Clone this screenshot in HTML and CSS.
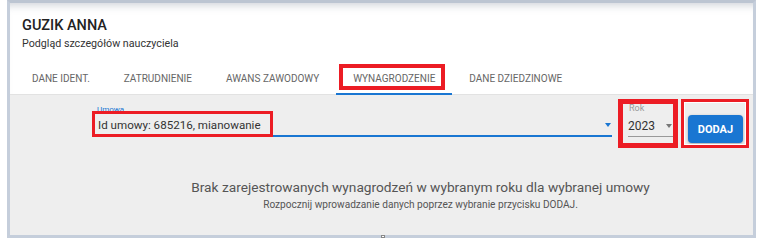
FILE: index.html
```html
<!DOCTYPE html>
<html>
<head>
  <meta charset="utf-8">
  <title>Wynagrodzenie</title>
  <link rel="stylesheet" href="styles.css">
</head>
<body>
  <div class="frame">
    <div class="card">
      <header class="head">
        <h1>GUZIK ANNA</h1>
        <p>Podgląd szczegółów nauczyciela</p>
      </header>
      <nav class="tabs">
        <a class="tab">DANE IDENT.</a>
        <a class="tab">ZATRUDNIENIE</a>
        <a class="tab">AWANS ZAWODOWY</a>
        <a class="tab active">WYNAGRODZENIE<span class="mark"></span></a>
        <a class="tab">DANE DZIEDZINOWE</a>
      </nav>
      <section class="panel">
        <div class="form">
          <div class="field umowa">
            <label>Umowa</label>
            <div class="control">
              <span class="value">Id umowy: 685216, mianowanie</span>
              <span class="caret"></span>
            </div>
            <span class="mark"></span>
          </div>
          <div class="field rok">
            <label>Rok</label>
            <div class="control">
              <span class="value">2023</span>
              <span class="caret"></span>
            </div>
            <span class="mark"></span>
          </div>
          <div class="add">
            <button class="btn">DODAJ</button>
            <span class="mark"></span>
          </div>
        </div>
        <div class="empty">
          <h2>Brak zarejestrowanych wynagrodzeń w wybranym roku dla wybranej umowy</h2>
          <p>Rozpocznij wprowadzanie danych poprzez wybranie przycisku DODAJ.</p>
        </div>
      </section>
    </div>
    <span class="grip"></span>
  </div>
</body>
</html>
```

FILE: styles.css
```css
body{
  margin: 0;
  background: #fff;
  font-family: Roboto, "Liberation Sans", sans-serif;
}
.frame{
  position: relative;
  box-sizing: border-box;
  width: 749px;
  height: 238px;
  margin-left: 7px;
  border: 3px solid #c5cedb;
  border-top-color: #bcc5d2;
}
.card{
  height: 100%;
  display: flex;
  flex-direction: column;
  background: #fff;
  box-shadow: inset 0 9px 9px -7px rgba(110,120,140,.35);
}
.head{
  padding: 14px 0 0 12px;
}
.head h1{
  margin: 0;
  font-size: 14.5px;
  line-height: 18px;
  font-weight: 500;
  color: #222;
}
.head p{
  margin: 0;
  padding-top: 2px;
  font-size: 10.7px;
  line-height: 14px;
  color: #333;
}
.tabs{
  display: flex;
  margin-top: 11px;
  padding-left: 5px;
  border-bottom: 1px solid #e2e2e2;
}
.tab{
  position: relative;
  padding: 0 17px;
  height: 31px;
  line-height: 33px;
  font-size: 10px;
  color: #666;
  border-bottom: 2px solid transparent;
  margin-bottom: -1px;
}
.tab.active{
  border-bottom-color: #1976d2;
}
.tab .mark{
  position: absolute;
  left: 3px;
  right: 7px;
  top: 2px;
  bottom: 3px;
  border: 4px solid #ec1c24;
}
.panel{
  flex: 1;
  background: #eeeeee;
}
.form{
  display: flex;
  padding: 8px 0 0 82px;
}
.field{
  position: relative;
  display: flex;
  flex-direction: column;
}
.field label{
  height: 10px;
  font-size: 8px;
  line-height: 10px;
  color: #999;
}
.umowa label{
  padding-left: 5px;
  line-height: 14px;
  color: #1976d2;
}
.control{
  display: flex;
  align-items: center;
  height: 24px;
  padding-top: 2px;
  box-sizing: border-box;
  border-bottom: 1px solid #999;
}
.umowa{
  width: 520px;
}
.umowa .control{
  border-bottom: 2px solid #1976d2;
}
.value{
  flex: 1;
  padding-left: 6px;
  font-size: 11.6px;
  color: #333;
}
.caret{
  width: 0;
  height: 0;
  margin-right: 1px;
  border-left: 3px solid transparent;
  border-right: 3px solid transparent;
  border-top: 4px solid #1976d2;
}
.rok{
  width: 45px;
  margin-left: 16px;
}
.rok label{
  padding-left: 1px;
  font-size: 9px;
}
.rok .value{
  padding-left: 0;
  font-size: 12px;
}
.rok .caret{
  border-top-color: #777;
}
.field .mark{
  position: absolute;
  border: 3px solid #ec1c24;
  left: 0;
  top: 8px;
  width: 175px;
  height: 20px;
}
.rok .mark{
  border-width: 5px;
  left: -10px;
  top: -4px;
  width: 50px;
  height: 39px;
}
.add{
  position: relative;
  margin-left: 15px;
  padding-top: 12px;
}
.btn{
  width: 55px;
  height: 28px;
  border: 0;
  border-radius: 4px;
  background: #1976d2;
  color: #fff;
  font-family: inherit;
  font-size: 11px;
  font-weight: 700;
  box-shadow: 0 1px 3px rgba(0,0,0,.3);
}
.add .mark{
  position: absolute;
  left: -7px;
  right: -6px;
  top: -4px;
  bottom: -5px;
  border: 3px solid #ec1c24;
  box-shadow: inset 0 0 0 1px #fff;
}
.empty{
  padding: 35px 0 0 78px;
  text-align: center;
  color: #555;
}
.empty h2{
  margin: 0;
  font-size: 13.7px;
  line-height: 18px;
  font-weight: 400;
}
.empty p{
  margin: 2px 0 0;
  font-size: 10.1px;
  line-height: 14px;
}
.grip{
  position: absolute;
  left: 371px;
  bottom: -3px;
  width: 4px;
  height: 3px;
  background: #fff;
  border: 1px solid #888;
  box-sizing: border-box;
}
```
